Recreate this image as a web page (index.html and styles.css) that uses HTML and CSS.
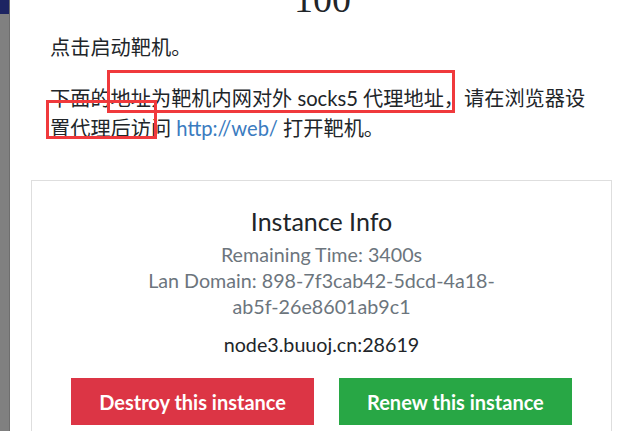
FILE: index.html
```html
<!DOCTYPE html>
<html lang="zh-CN">
<head>
<meta charset="utf-8">
<title>Instance</title>
<link rel="stylesheet" href="styles.css">
</head>
<body>
<div class="sidebar"><div class="sidebar-top"></div></div>
<main class="main">
  <div class="count">100</div>
  <p class="intro">点击启动靶机。</p>
  <p class="desc">下面的地址为靶机内网对外 socks5 代理地址，请在浏览器设置代理后访问 <a class="link" href="#">http://web/</a> 打开靶机。</p>
  <section class="card">
    <h3 class="card-title">Instance Info</h3>
    <div class="info">
      <div class="muted">Remaining Time: 3400s</div>
      <div class="muted">Lan Domain: 898-7f3cab42-5dcd-4a18-ab5f-26e8601ab9c1</div>
    </div>
    <div class="host">node3.buuoj.cn:28619</div>
    <div class="actions">
      <button class="btn btn-danger">Destroy this instance</button>
      <button class="btn btn-success">Renew this instance</button>
    </div>
  </section>
  <div class="mark mark-one"></div>
  <div class="mark mark-two"></div>
</main>
</body>
</html>
```

FILE: styles.css
```css
html, body {
  margin: 0;
  padding: 0;
  background: #fff;
  overflow: hidden;
}
body {
  display: flex;
  height: 431px;
  font-family: "Lato", "Noto Sans CJK SC", sans-serif;
  color: #212529;
}
.sidebar {
  width: 9px;
  flex: 0 0 9px;
  background: #808080;
  border-right: 1px solid #6e6e6e;
}
.sidebar-top {
  height: 14px;
  background: #1d2462;
}
.main {
  flex: 1;
  position: relative;
  padding: 0 24px 0 40px;
}
.count {
  font-family: "Liberation Serif", serif;
  font-size: 38px;
  line-height: 38px;
  margin-top: -20px;
  text-align: center;
  color: #212529;
}
.intro, .desc {
  margin: 0;
  font-size: 20.2px;
  line-height: 30px;
}
.intro { margin-top: 14px; }
.desc { margin-top: 21px; }
.link {
  color: #3a7bc0;
  text-decoration: none;
}
.card {
  margin: 37px -17px 0 -19px;
  border: 1px solid #dedede;
  border-bottom: none;
  padding: 25px 0 6px;
  text-align: center;
}
.card-title {
  margin: 0;
  font-size: 25px;
  font-weight: 400;
  line-height: 30px;
}
.info {
  margin: 6px auto 0;
  width: 360px;
  font-size: 19.7px;
  line-height: 26px;
}
.muted { color: #6c757d; }
.host {
  margin-top: 12px;
  font-size: 19.7px;
  line-height: 26px;
}
.actions {
  margin-top: 20px;
  display: flex;
  justify-content: center;
  gap: 25px;
}
.btn {
  border: none;
  height: 47px;
  padding: 0 28px;
  font-family: "Lato", sans-serif;
  font-size: 20px;
  font-weight: 700;
  color: #fff;
  border-radius: 0;
}
.btn-danger { background: #dc3545; }
.btn-success { background: #28a745; }
.mark {
  position: absolute;
  border: 3px solid #f0393c;
  box-sizing: border-box;
}
.mark-one {
  left: 97px;
  top: 70px;
  width: 348px;
  height: 43px;
}
.mark-two {
  left: 36px;
  top: 100px;
  width: 111px;
  height: 39px;
}
```
